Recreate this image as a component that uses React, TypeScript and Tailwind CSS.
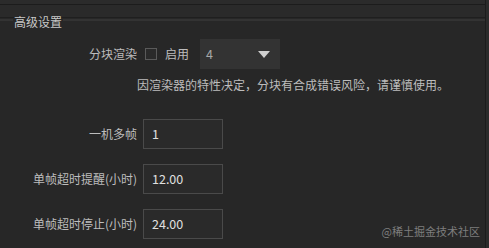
import React from "react";

const font = { fontFamily: '"Noto Sans CJK SC", "Noto Sans", sans-serif' };

function InputRow({ label, value }: { label: string; value: string }) {
  return (
    <div className="flex items-center h-[30px]">
      <div className="w-[137px] text-right text-[12px] text-[#bdbdbd] leading-none">{label}</div>
      <div className="ml-[6px] w-[80px] h-[30px] border border-[#4a4a4a] bg-[#2a2a2a] flex items-center pl-[8px] text-[12.5px] text-[#e0e0e0]">
        {value}
      </div>
    </div>
  );
}

export default function App() {
  return (
    <div className="w-[489px] h-[248px] bg-[#272727] flex overflow-hidden relative" style={font}>
      <div className="flex-1 flex flex-col">
        <div className="h-[4px] bg-[#2b2b2b]" />
        <div className="h-px bg-[#1c1c1c]" />
        <div className="h-[12px] bg-[#2a2a2a]" />
        <div className="h-px bg-[#1f1f1f]" />
        <div className="flex items-start h-[13px]">
          <div className="w-[13px] h-[2px] mt-[1px] bg-[#333333]" />
          <div className="text-[12px] leading-none text-[#c8c8c8] px-[1px] -mt-[2px]">高级设置</div>
          <div className="flex-1 h-[2px] mt-[1px] bg-[#333333]" />
        </div>
        <div className="mt-[8px] flex items-center h-[30px]">
          <div className="w-[137px] text-right text-[12px] text-[#bdbdbd] leading-none">分块渲染</div>
          <div className="ml-[8px] w-[12px] h-[12px] border border-[#5a5a5a] bg-[#2a2a2a]" />
          <div className="ml-[8px] text-[12px] text-[#bdbdbd] leading-none">启用</div>
          <div className="ml-[11px] w-[80px] h-[30px] bg-[#333333] flex items-center justify-between pl-[6px] pr-[10px]">
            <span className="text-[12.5px] text-[#a8a8a8]">4</span>
            <svg width="12" height="7" viewBox="0 0 12 7">
              <polygon points="0,0 12,0 6,7" fill="#cfcfcf" />
            </svg>
          </div>
        </div>
        <div className="mt-[8px] ml-[137px] h-[16px] leading-[16px] text-[12px] text-[#bdbdbd] whitespace-nowrap">
          因渲染器的特性决定，分块有合成错误风险，请谨慎使用。
        </div>
        <div className="mt-[26px] flex flex-col gap-[15px]">
          <InputRow label="一机多帧" value="1" />
          <InputRow label="单帧超时提醒(小时)" value="12.00" />
          <InputRow label="单帧超时停止(小时)" value="24.00" />
        </div>
      </div>
      <div className="w-[4px] border-l border-[#1c1c1c] bg-[#2b2b2b]" />
      <div className="absolute right-[9px] bottom-[11px] text-[11px] leading-none text-[#7e7e7e]">@稀土掘金技术社区</div>
    </div>
  );
}
